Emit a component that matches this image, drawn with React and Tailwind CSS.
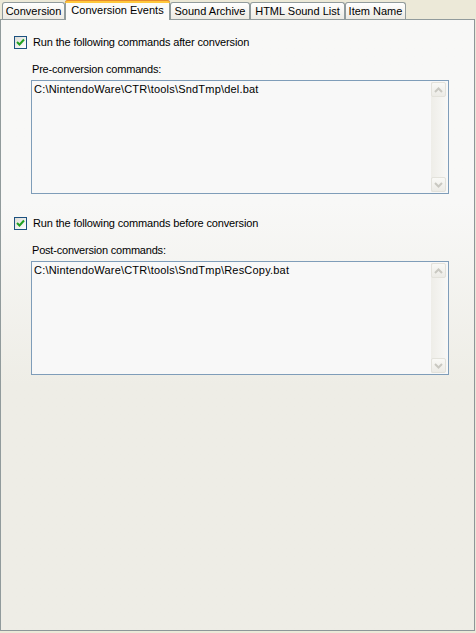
import React from "react";

const font = { fontFamily: '"Liberation Sans", Arial, sans-serif' };

function Tab({ label, width, selected }) {
  if (selected) {
    return (
      <div
        className="relative z-10 mb-[-1px] h-[20px] flex justify-center border border-b-0 border-[#919b9c] rounded-t-[3px] bg-[#fbfbf9]"
        style={{ width }}
      >
        <div className="absolute left-[-1px] right-[-1px] top-[-1px] h-[3px] rounded-t-[3px] bg-[#ffc83c] border-t border-[#e68b2c]" />
        <span className="pt-[3px] text-[11px] leading-[13px] text-black">{label}</span>
      </div>
    );
  }
  return (
    <div
      className="h-[17px] flex justify-center border border-b-0 border-[#919b9c] rounded-t-[3px] bg-gradient-to-b from-[#ffffff] to-[#eceae3]"
      style={{ width }}
    >
      <span className="pt-[2px] text-[11px] leading-[13px] text-black">{label}</span>
    </div>
  );
}

function Checkbox() {
  return (
    <div className="w-[13px] h-[13px] border border-[#1c5180] bg-gradient-to-br from-[#dcdcd6] to-[#ffffff] flex items-center justify-center">
      <svg width="9" height="9" viewBox="0 0 9 9">
        <path d="M1 4 L3.5 6.5 L8 1.5" fill="none" stroke="#21a121" strokeWidth="2" />
      </svg>
    </div>
  );
}

function Arrow({ up }) {
  return (
    <div className="w-[15px] h-[15px] rounded-[2px] border border-[#e3e2db] bg-gradient-to-b from-[#f9f9f6] to-[#ecebe6] flex items-center justify-center">
      <svg width="9" height="6" viewBox="0 0 9 6">
        <path
          d={up ? "M1 5 L4.5 1.5 L8 5" : "M1 1 L4.5 4.5 L8 1"}
          fill="none"
          stroke="#c9c8c1"
          strokeWidth="2"
        />
      </svg>
    </div>
  );
}

function CommandBox({ text }) {
  return (
    <div className="w-[418px] h-[114px] border border-[#7f9db9] bg-[#f8f8f8] flex">
      <div className="flex-1 px-[2px] pt-[2px] text-[11px] leading-[13px] tracking-[0.2px] text-black">
        {text}
      </div>
      <div className="w-[16px] my-[1px] mr-[1px] flex flex-col justify-between bg-gradient-to-r from-[#eeede8] to-[#f8f8f6]">
        <Arrow up />
        <Arrow />
      </div>
    </div>
  );
}

function Group({ checkLabel, boxLabel, command }) {
  return (
    <div className="flex flex-col">
      <div className="flex items-center gap-[6px] h-[13px]">
        <Checkbox />
        <span className="text-[11px] leading-[13px] tracking-[-0.15px] text-black">{checkLabel}</span>
      </div>
      <div className="pl-[17px] pt-[14px] flex flex-col">
        <span className="pl-[1px] text-[11px] leading-[13px] tracking-[-0.2px] text-black">{boxLabel}</span>
        <div className="pt-[4px]">
          <CommandBox text={command} />
        </div>
      </div>
    </div>
  );
}

export default function App() {
  return (
    <div className="w-[476px] h-[633px] bg-[#ece9d8] flex flex-col" style={font}>
      <div className="h-[19px] flex items-end pl-[2px]">
        <Tab label="Conversion" width={63} />
        <Tab label="Conversion Events" width={105} selected />
        <Tab label="Sound Archive" width={80} />
        <Tab label="HTML Sound List" width={95} />
        <Tab label="Item Name" width={61} />
      </div>
      <div className="w-[475px] h-[612px] border border-[#919b9c] border-r-[#8d9699] border-b-[#8d9699] bg-gradient-to-b from-[#f8f8f7] from-30% to-[#eeede6] to-60% pt-[16px] pl-[13px] flex flex-col gap-[23px]">
        <Group
          checkLabel="Run the following commands after conversion"
          boxLabel="Pre-conversion commands:"
          command="C:\NintendoWare\CTR\tools\SndTmp\del.bat"
        />
        <Group
          checkLabel="Run the following commands before conversion"
          boxLabel="Post-conversion commands:"
          command="C:\NintendoWare\CTR\tools\SndTmp\ResCopy.bat"
        />
      </div>
    </div>
  );
}
